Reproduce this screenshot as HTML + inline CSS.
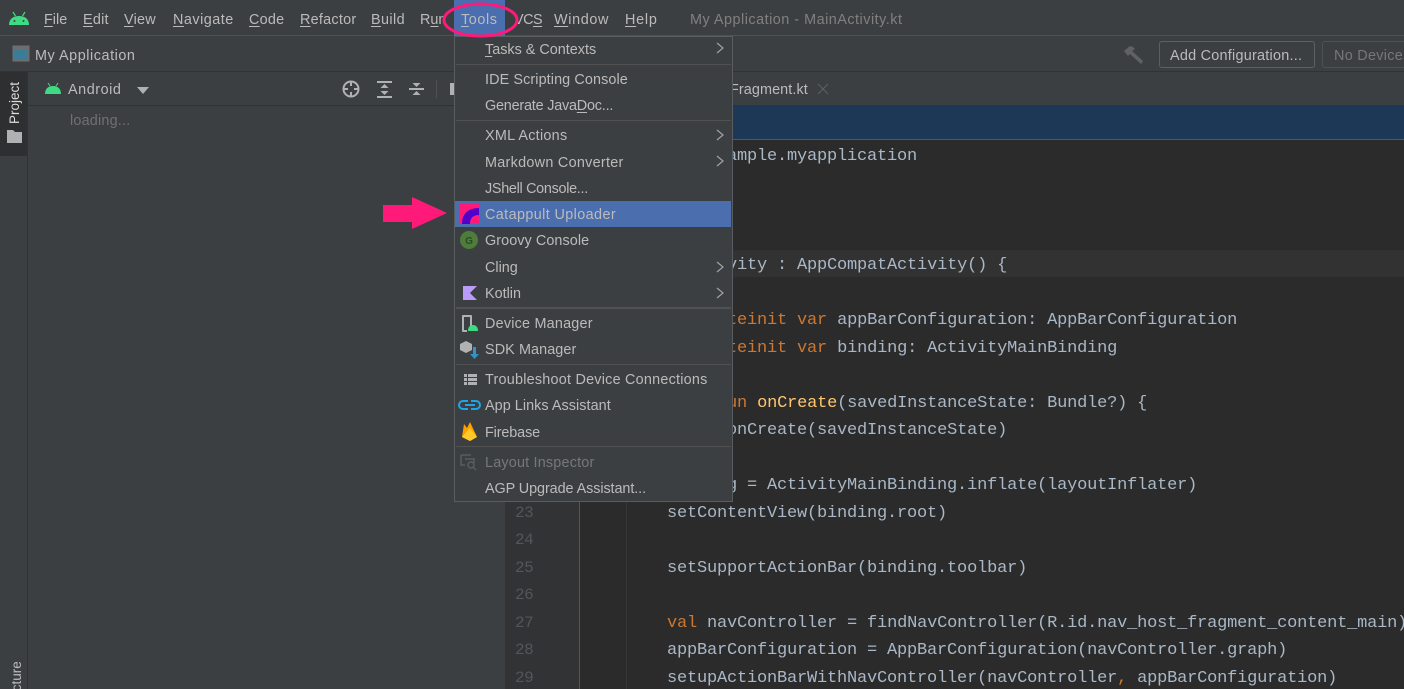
<!DOCTYPE html>
<html><head><meta charset="utf-8"><style>
html,body{margin:0;padding:0;background:#3c3f41}
#r{position:relative;width:1404px;height:689px;overflow:hidden;background:#3c3f41;font-family:"Liberation Sans",sans-serif;font-size:14.4px;color:#bbb}
.a{position:absolute}
.t{position:absolute;white-space:pre;line-height:18px;height:18px}
.m{top:11px}
.i{position:absolute;white-space:pre;left:485px;line-height:18px;height:18px}
.s{position:absolute;left:456px;width:275px;height:1px;background:#515151}
.c{position:absolute;left:587px;margin-top:2px;white-space:pre;font-family:"Liberation Mono",monospace;font-size:17px;letter-spacing:-.2px;line-height:20px;height:20px;color:#a9b7c6}
.k{color:#cc7832}.f{color:#ffc66d}
.n{position:absolute;left:515px;margin-top:1px;white-space:pre;font-family:"Liberation Mono",monospace;font-size:16px;letter-spacing:-.5px;line-height:20px;color:#53565a}
u{text-underline-offset:2px}
</style></head><body><div id="r">
<div class="a" style="left:0;top:35px;width:1404px;height:1px;background:#515151"></div>
<div class="a" style="left:0;top:71px;width:1404px;height:1px;background:#323232"></div>
<svg class="a" style="left:8px;top:11px" width="22" height="16" viewBox="0 0 22 16"><path d="M1 14C1 8 5 5 11 5s10 3 10 9z" fill="#3ddc84"/><path d="M5 1l2.500 4M17 1l-2.500 4" stroke="#3ddc84" stroke-width="1.200"/><circle cx="6.500" cy="10" r="1" fill="#3c3f41"/><circle cx="15.500" cy="10" r="1" fill="#3c3f41"/></svg>
<span class="t m" style="left:44px"><u>F</u>ile</span>
<span class="t m" style="left:83px;letter-spacing:.25px"><u>E</u>dit</span>
<span class="t m" style="left:124px;letter-spacing:.25px"><u>V</u>iew</span>
<span class="t m" style="left:173px;letter-spacing:.5px"><u>N</u>avigate</span>
<span class="t m" style="left:249px;letter-spacing:.25px"><u>C</u>ode</span>
<span class="t m" style="left:300px;letter-spacing:.25px"><u>R</u>efactor</span>
<span class="t m" style="left:371px;letter-spacing:.4px"><u>B</u>uild</span>
<span class="t m" style="left:420px">R<u>u</u>n</span>
<div class="a" style="left:454px;top:0;width:51px;height:36px;background:#4b6eaf"></div>
<span class="t m" style="left:461px;letter-spacing:.6px"><u>T</u>ools</span>
<span class="t m" style="left:514px;letter-spacing:-.5px">VC<u>S</u></span>
<span class="t m" style="left:554px;letter-spacing:.65px"><u>W</u>indow</span>
<span class="t m" style="left:625px;letter-spacing:.75px"><u>H</u>elp</span>
<span class="t m" style="left:690px;color:#808080;letter-spacing:.5px">My Application - MainActivity.kt</span>
<svg class="a" style="left:12px;top:45px" width="18" height="18" viewBox="0 0 18 18"><rect x="0.500" y="0.500" width="17" height="16" fill="#6e6e6e"/><rect x="2" y="4" width="14" height="11" fill="#3d7c96"/></svg>
<span class="t" style="left:35px;top:47px;letter-spacing:.55px">My Application</span>
<svg class="a" style="left:1123px;top:44px" width="22" height="20" viewBox="0 0 22 20"><path d="M1 7l6-5 3 1 2 2-3 2 11 10-2 3L7 10l-2 2z" fill="#5f6162"/></svg>
<div class="a" style="left:1159px;top:41px;width:154px;height:25px;border:1px solid #5e6060;border-radius:3px"></div>
<span class="t" style="left:1170px;top:47px;letter-spacing:.25px">Add Configuration...</span>
<div class="a" style="left:1322px;top:41px;width:100px;height:25px;border:1px solid #4f5254;border-radius:3px"></div>
<span class="t" style="left:1334px;top:47px;color:#777;letter-spacing:.3px">No Devices</span>

<div class="a" style="left:0;top:72px;width:27px;height:617px;background:#3c3f41;border-right:1px solid #323232"></div>
<div class="a" style="left:0;top:72px;width:27px;height:84px;background:#2d2f30"></div>
<span class="t" style="left:-10px;top:94px;width:50px;text-align:center;transform:rotate(-90deg);color:#ddd;font-size:13.500px">Project</span>
<svg class="a" style="left:7px;top:129px" width="15" height="14" viewBox="0 0 15 14"><path d="M0 1h6l2 2h7v11H0z" fill="#afb1b3"/></svg>
<span class="t" style="left:-13px;top:677px;width:60px;text-align:left;transform:rotate(-90deg);color:#bbb;font-size:13.500px">Structure</span>

<div class="a" style="left:28px;top:105px;width:477px;height:1px;background:#323232"></div>
<svg class="a" style="left:45px;top:82px" width="16" height="13" viewBox="0 0 16 13"><path d="M0 12C0 7 3 4 8 4s8 3 8 8z" fill="#3ddc84"/><path d="M3 1l2 3M13 1l-2 3" stroke="#3ddc84" stroke-width="1"/></svg>
<span class="t" style="left:68px;top:81px;letter-spacing:.55px">Android</span>
<svg class="a" style="left:137px;top:87px" width="12" height="7"><path d="M0 0h12L6 7z" fill="#afb1b3"/></svg>
<svg class="a" style="left:342px;top:80px" width="125" height="20" viewBox="0 0 125 20" fill="none"><circle cx="9" cy="9" r="7.500" stroke="#afb1b3" stroke-width="2"/><path d="M9 1v5M9 12v5M1 9h5M12 9h5" stroke="#afb1b3" stroke-width="2"/><path d="M35 2h15M35 17h15" stroke="#afb1b3" stroke-width="2"/><path d="M42.500 4l4 4h-8zM42.500 15l4-4h-8z" fill="#afb1b3"/><path d="M67 9h15" stroke="#afb1b3" stroke-width="2"/><path d="M74.500 7l-4-4h8zM74.500 11l-4 4h8z" fill="#afb1b3"/><path d="M94.500 0v18" stroke="#515151"/><rect x="108" y="3" width="4" height="12" fill="#afb1b3"/></svg>
<span class="t" style="left:70px;top:112px;color:#707070;letter-spacing:.2px">loading...</span>

<div class="a" style="left:505px;top:72px;width:899px;height:33px;background:#3c3f41"></div>
<span class="t" style="left:730px;top:81px;letter-spacing:.1px">Fragment.kt</span>
<svg class="a" style="left:817px;top:83px" width="12" height="12"><path d="M1 1l10 10M11 1L1 11" stroke="#5e6163" stroke-width="1"/></svg>
<div class="a" style="left:505px;top:105px;width:899px;height:1px;background:#323232"></div>
<div class="a" style="left:505px;top:106px;width:899px;height:33px;background:#1d3857"></div>
<div class="a" style="left:505px;top:139px;width:899px;height:1px;background:#4a5a6a"></div>
<div class="a" style="left:505px;top:140px;width:74px;height:549px;background:#313335"></div>
<div class="a" style="left:579px;top:140px;width:1px;height:549px;background:#555"></div>
<div class="a" style="left:580px;top:140px;width:824px;height:549px;background:#2b2b2b"></div>
<div class="a" style="left:626px;top:290px;width:1px;height:399px;background:#373737"></div>
<div class="a" style="left:580px;top:250px;width:824px;height:27px;background:#323232"></div>
<span class="c" style="top:145px"><span class="k">package</span> com.example.myapplication</span>
<span class="c" style="top:254px"><span class="k">class</span> MainActivity : AppCompatActivity() {</span>
<span class="c" style="top:309px">    <span class="k">private lateinit var</span> appBarConfiguration: AppBarConfiguration</span>
<span class="c" style="top:337px">    <span class="k">private lateinit var</span> binding: ActivityMainBinding</span>
<span class="c" style="top:392px">    <span class="k">override fun</span> <span class="f">onCreate</span>(savedInstanceState: Bundle?) {</span>
<span class="c" style="top:419px">        <span class="k">super</span>.onCreate(savedInstanceState)</span>
<span class="c" style="top:474px">        binding = ActivityMainBinding.inflate(layoutInflater)</span>
<span class="c" style="top:502px">        setContentView(binding.root)</span>
<span class="c" style="top:557px">        setSupportActionBar(binding.toolbar)</span>
<span class="c" style="top:612px">        <span class="k">val</span> navController = findNavController(R.id.nav_host_fragment_content_main)</span>
<span class="c" style="top:639px">        appBarConfiguration = AppBarConfiguration(navController.graph)</span>
<span class="c" style="top:667px">        setupActionBarWithNavController(navController<span class="k">,</span> appBarConfiguration)</span>
<span class="n" style="top:502px">23</span><span class="n" style="top:529px">24</span><span class="n" style="top:557px">25</span><span class="n" style="top:584px">26</span><span class="n" style="top:612px">27</span><span class="n" style="top:639px">28</span><span class="n" style="top:667px">29</span>

<div class="a" style="left:454px;top:36px;width:277px;height:464px;background:#3c3f41;border:1px solid #5a5d5f"></div>
<div class="a" style="left:455px;top:201px;width:276px;height:26px;background:#4b6eaf"></div>
<div class="s" style="top:64px"></div><div class="s" style="top:120px"></div><div class="s" style="top:307px;height:2px"></div><div class="s" style="top:364px"></div><div class="s" style="top:446px"></div>
<span class="i" style="top:41px"><u>T</u>asks &amp; Contexts</span>
<span class="i" style="top:71px;letter-spacing:.1px">IDE Scripting Console</span>
<span class="i" style="top:97px;letter-spacing:-.2px">Generate Java<u>D</u>oc...</span>
<span class="i" style="top:127px;letter-spacing:.27px">XML Actions</span>
<span class="i" style="top:154px;letter-spacing:.28px">Markdown Converter</span>
<span class="i" style="top:180px;letter-spacing:-.3px">JShell Console...</span>
<span class="i" style="top:206px;letter-spacing:.39px">Catappult Uploader</span>
<span class="i" style="top:232px;letter-spacing:.07px">Groovy Console</span>
<span class="i" style="top:259px">Cling</span>
<span class="i" style="top:285px">Kotlin</span>
<span class="i" style="top:315px;letter-spacing:.21px">Device Manager</span>
<span class="i" style="top:341px;letter-spacing:.09px">SDK Manager</span>
<span class="i" style="top:371px;letter-spacing:.23px">Troubleshoot Device Connections</span>
<span class="i" style="top:397px;letter-spacing:.05px">App Links Assistant</span>
<span class="i" style="top:424px;letter-spacing:-.12px">Firebase</span>
<span class="i" style="top:454px;color:#777;letter-spacing:.19px">Layout Inspector</span>
<span class="i" style="top:480px;letter-spacing:-.08px">AGP Upgrade Assistant...</span>
<svg class="a" style="left:0;top:0" width="1404" height="689" viewBox="0 0 1404 689" fill="none">
<g stroke="#a0a2a4" stroke-width="1.200"><path d="M717 43l6 5-6 5M717 130l6 5-6 5M717 156l6 5-6 5M717 262l6 5-6 5M717 288l6 5-6 5"/></g>
<ellipse cx="480.500" cy="20" rx="36.500" ry="16" stroke="#ff1a7a" stroke-width="3"/>
<path d="M383 205h29v-8l35 16-35 16v-7h-29z" fill="#ff1a7a"/>
<rect x="459" y="204" width="20" height="20" fill="#ff1a7a"/>
<path d="M462 224c0-10 6-16 17-16v7c-6 0-9 3-9 9z" fill="#5000c8"/>
<circle cx="469" cy="240" r="9" fill="#4d7c3c"/>
<text x="469" y="244" text-anchor="middle" font-family="Liberation Sans" font-size="10" font-weight="bold" fill="#2b4a23">G</text>
<path d="M463 286h14l-7 7 7 7h-14z" fill="#b99bf8"/>
<path d="M471 327v-11h-8v15h4" stroke="#afb1b3" stroke-width="2" stroke-linejoin="round"/>
<path d="M468 331c0-4 2-6 5-6s5 2 5 6z" fill="#3ddc84"/>
<path d="M460 344l6-3 6 3v6l-6 3-6-3z" fill="#afb1b3"/>
<path d="M473 347h3v7h3l-4.500 5-4.500-5h3z" fill="#3592c4"/>
<path d="M464 374h3v3h-3zM464 378h3v3h-3zM464 382h3v3h-3zM468 374h9v3h-9zM468 378h9v3h-9zM468 382h9v3h-9z" fill="#afb1b3"/>
<path d="M468 401h-5a4 4 0 0 0 0 8h5M471 401h5a4 4 0 0 1 0 8h-5M465 405h10" stroke="#1ea5e9" stroke-width="2"/>
<path d="M462 437l2-13 3 4 3-6 7 15-7 4z" fill="#ffa000"/><path d="M462 437l8-9 7 9-7 4z" fill="#ffca28"/>
<path d="M461 455h10M461 455v10h4M465 459h9v4" stroke="#5a5d5f" stroke-width="1.500"/><circle cx="471" cy="465" r="3" stroke="#5a5d5f" stroke-width="1.500"/><path d="M473 467l3 3" stroke="#5a5d5f" stroke-width="1.500"/>
</svg>
</div></body></html>
